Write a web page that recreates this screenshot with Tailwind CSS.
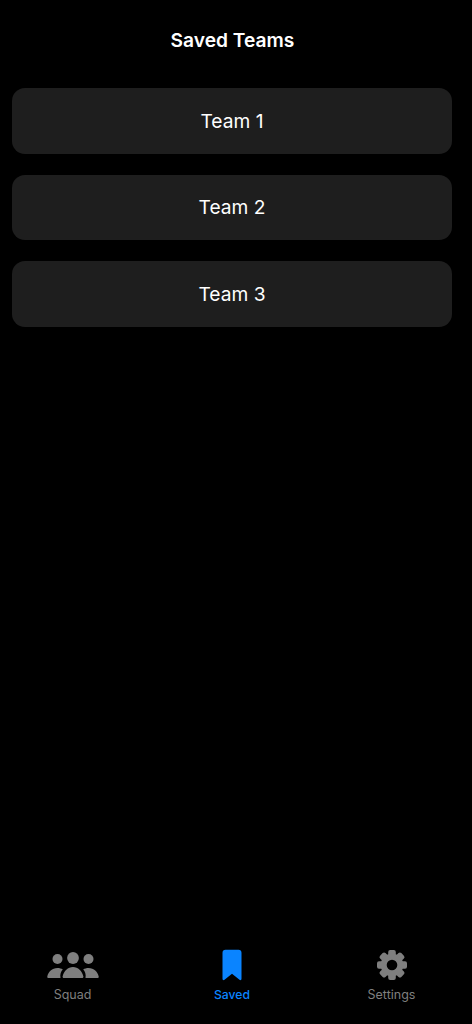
<!DOCTYPE html>
<html lang="en">
<head>
  <meta charset="UTF-8">
  <meta name="viewport" content="width=device-width, initial-scale=1.0">
  <script src="https://cdn.jsdelivr.net/npm/@tailwindcss/browser@4"></script>
  <title>Saved Teams</title>
</head>
<body class="bg-black font-['Inter',sans-serif] text-white">
  <div class="flex flex-col h-[1024px] w-[472px] overflow-hidden">

    <h1 class="pt-[26px] h-[88px] pr-[7px] text-center text-[19.2px] leading-[28px] font-semibold">Saved Teams</h1>

    <!-- list -->
    <div class="flex flex-col gap-[21px] pl-[12px] pr-[20px] flex-1">
      <div class="flex items-center justify-center h-[65.5px] pt-[1px] rounded-[13px] bg-[#1e1e1e] text-[19.2px]">Team 1</div>
      <div class="flex items-center justify-center h-[65.5px] pt-[1px] rounded-[13px] bg-[#1e1e1e] text-[19.2px]">Team 2</div>
      <div class="flex items-center justify-center h-[65.5px] pt-[1px] rounded-[13px] bg-[#1e1e1e] text-[19.2px]">Team 3</div>
    </div>

    <!-- tabs -->
    <div class="flex justify-between pl-[22.5px] pr-[30.5px] h-[75px] shrink-0 text-[12.5px] text-[#7f7f7f]">
      <div class="flex flex-col items-center w-[100px]">
        <svg class="w-[52px] h-[32px]" viewBox="0 0 52 32" fill="#7f7f7f">
          <circle cx="26" cy="9" r="5.9"/>
          <circle cx="10.500" cy="10" r="5"/>
          <circle cx="41.500" cy="10" r="5"/>
          <path d="M17 29c-1 0-1.600-.6-1.400-1.500C16.800 22 21 18 26 18s9.200 4 10.400 9.500c.2.900-.4 1.500-1.400 1.500z"/>
          <path d="M1.500 29c-1 0-1.400-.6-1.200-1.500C1.300 23 5 19 10.500 19c2 0 3.800.5 5.300 1.500-1.800 1.800-3 4.500-2.300 8.500z"/>
          <path d="M50.500 29c1 0 1.400-.6 1.200-1.500C50.700 23 47 19 41.500 19c-2 0-3.800.5-5.300 1.500 1.800 1.800 3 4.500 2.300 8.500z"/>
        </svg>
        <span class="leading-[18px] mt-[5px]">Squad</span>
      </div>
      <div class="flex flex-col items-center w-[100px] text-[#0a84ff]">
        <svg class="w-[20px] h-[32px]" viewBox="0 0 20 32" fill="#0a84ff">
          <path d="M3.500.8h13c1.900 0 3 1.100 3 3v26c0 1.300-1 1.800-2 .9L10 24.700l-7.500 6c-1 .9-2 .4-2-.9v-26c0-1.900 1.100-3 3-3z"/>
        </svg>
        <span class="leading-[18px] mt-[5px] font-medium text-[12.2px]">Saved</span>
      </div>
      <div class="flex flex-col items-center w-[100px]">
        <svg class="w-[32px] h-[32px]" viewBox="0 0 32 32">
          <g fill="#7f7f7f">
            <rect x="12.200" y="1" width="7.600" height="30" rx="2"/>
            <rect x="12.200" y="1" width="7.600" height="30" rx="2" transform="rotate(45 16 16)"/>
            <rect x="12.200" y="1" width="7.600" height="30" rx="2" transform="rotate(90 16 16)"/>
            <rect x="12.200" y="1" width="7.600" height="30" rx="2" transform="rotate(135 16 16)"/>
            <circle cx="16" cy="16" r="11.300"/>
          </g>
          <circle cx="16" cy="16" r="5.300" fill="#000"/>
        </svg>
        <span class="leading-[18px] mt-[5px]">Settings</span>
      </div>
    </div>
  </div>
</body>
</html>
